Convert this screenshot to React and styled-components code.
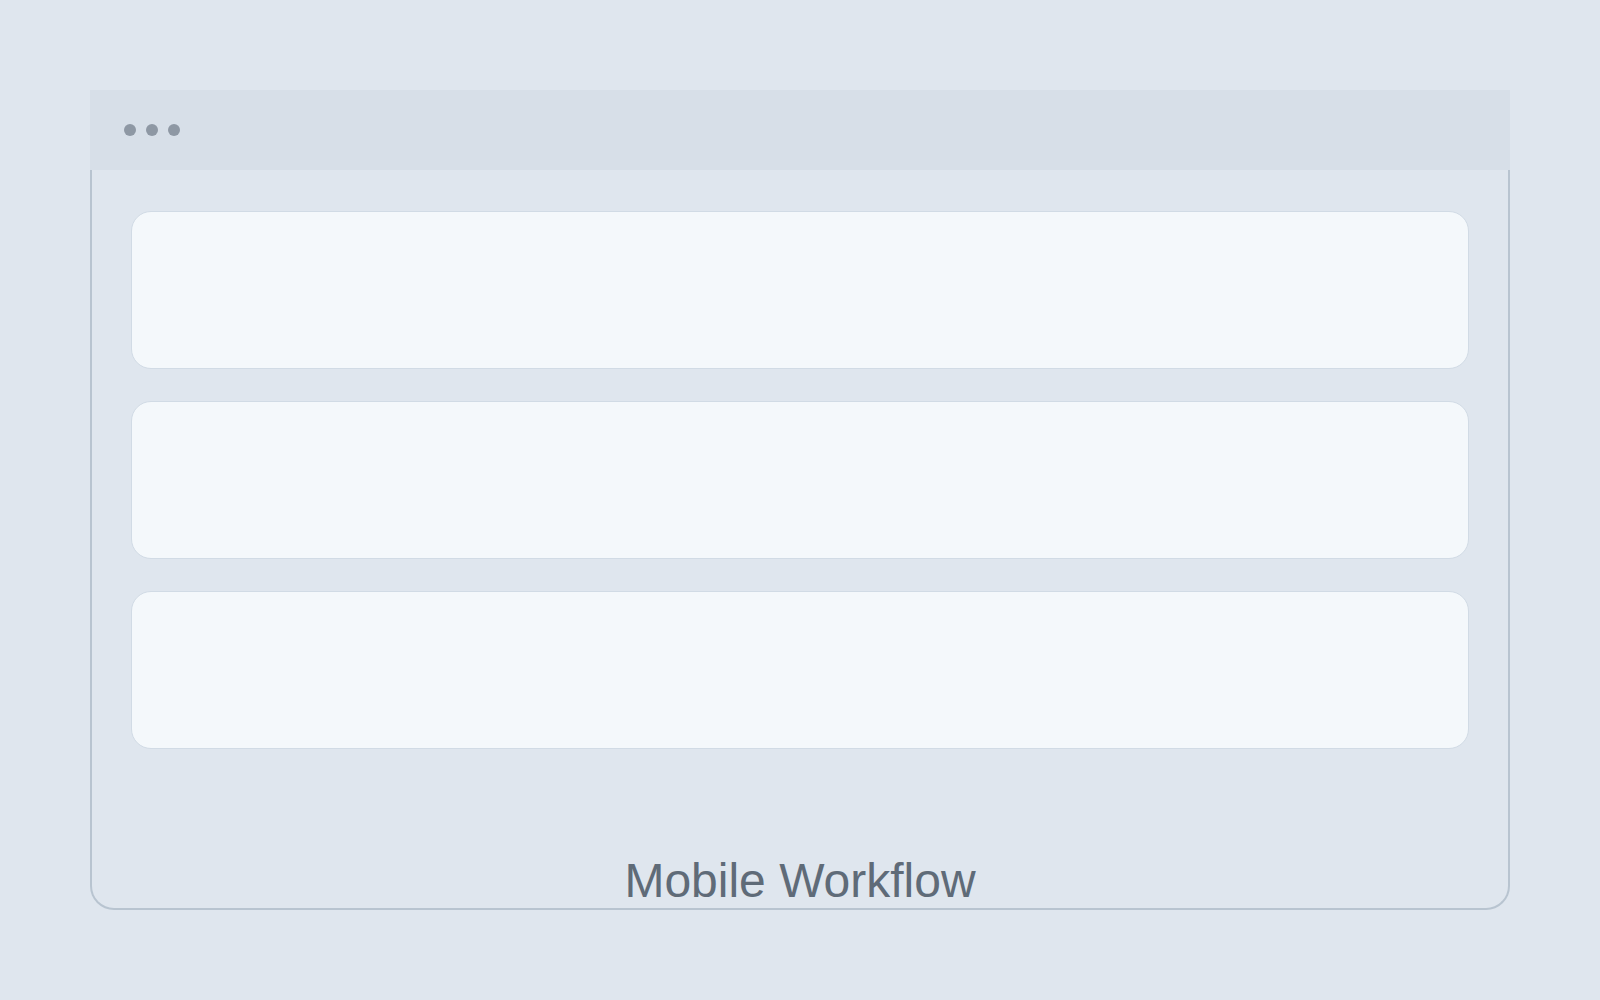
import React from "react";
import styled, { createGlobalStyle } from "styled-components";

const GlobalStyle = createGlobalStyle`
  * {
    box-sizing: border-box;
  }

  body {
    margin: 0;
    background: #dfe6ee;
    font-family: "Liberation Sans", Arial, sans-serif;
  }
`;

const Page = styled.div`
  min-height: 100vh;
  padding: 90px;
  display: flex;
  flex-direction: column;
`;

const Window = styled.div`
  height: 820px;
  display: flex;
  flex-direction: column;
`;

const TitleBar = styled.div`
  height: 80px;
  flex-shrink: 0;
  display: flex;
  align-items: center;
  gap: 10px;
  padding-left: 34px;
  background: #d7dfe8;
`;

const Dot = styled.span`
  width: 12px;
  height: 12px;
  border-radius: 50%;
  background: #8e98a4;
`;

const Body = styled.div`
  flex: 1;
  display: flex;
  flex-direction: column;
  gap: 32px;
  padding: 41px 39px 0;
  border: 2px solid #b8c4d0;
  border-top: none;
  border-radius: 0 0 24px 24px;
`;

const Card = styled.div`
  height: 158px;
  flex-shrink: 0;
  background: #f4f8fb;
  border: 1px solid #d1dbe5;
  border-radius: 20px;
`;

const Label = styled.div`
  margin-top: auto;
  text-align: center;
  font-size: 48px;
  line-height: 1.15;
  color: #5f6b78;
`;

const cards = [1, 2, 3];

const App = () => {
  return (
    <>
      <GlobalStyle />
      <Page>
        <Window>
          <TitleBar>
            <Dot />
            <Dot />
            <Dot />
          </TitleBar>
          <Body>
            {cards.map((id) => (
              <Card key={id} />
            ))}
            <Label>Mobile Workflow</Label>
          </Body>
        </Window>
      </Page>
    </>
  );
};

export default App;
